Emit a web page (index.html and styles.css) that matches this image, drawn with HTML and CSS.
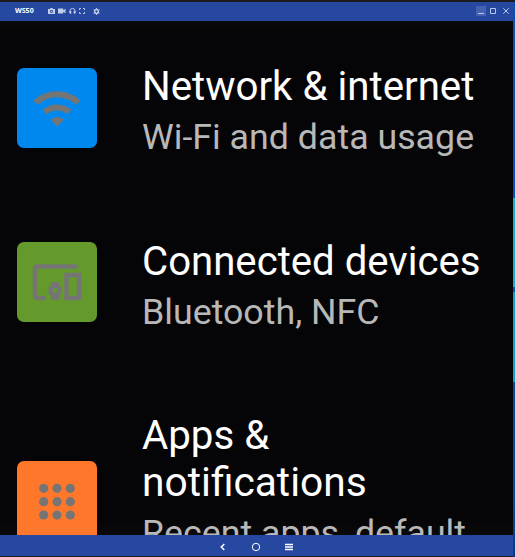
FILE: index.html
```html
<!DOCTYPE html>
<html lang="en">
<head>
<meta charset="utf-8">
<title>WS50</title>
<link rel="stylesheet" href="styles.css">
</head>
<body>
<div class="window">
  <header class="titlebar">
    <span class="name">WS50</span>
    <div class="tools">
      <svg width="7" height="6" viewBox="0 0 7 6"><path fill-rule="evenodd" d="M0 1h2L2.500 0h2L5 1h2v5H0zM3.500 1.700a1.600 1.600 0 1 0 0 3.200a1.600 1.600 0 0 0 0-3.200z"/><circle cx="3.500" cy="3.300" r=".8"/></svg>
      <svg width="8" height="6" viewBox="0 0 8 6"><path d="M0 .5h5.200v1.800L7.500.7v4.600L5.200 3.700v1.800H0z"/></svg>
      <svg width="7" height="6" viewBox="0 0 7 6"><path class="line" d="M1 4V2.800a2.500 2.300 0 0 1 5 0V4"/><path d="M.3 3h2v2.800h-1L.3 5zM4.700 3h2v2l-1 .8h-1z"/></svg>
      <svg width="6" height="6" viewBox="0 0 6 6"><path class="line" d="M.5 2V.5H2M4 .5h1.500V2M5.500 4v1.500H4M2 5.500H.5V4"/></svg>
      <svg class="gear" width="7" height="7" viewBox="0 0 7 7"><circle class="ring" cx="3.500" cy="3.500" r="1.900"/><path class="line" d="M3.500 0v1.300M3.500 5.700V7M.5 1.700l1.100.7M5.400 4.600l1.100.7M.5 5.300l1.100-.7M5.400 2.400l1.100-.7"/></svg>
    </div>
    <div class="controls">
      <span class="minimize"><svg width="10" height="10" viewBox="0 0 10 10"><path class="line" d="M2 7.500h6"/></svg></span>
      <svg width="6" height="6" viewBox="0 0 6 6"><path class="line" d="M.5.5h5v5h-5z"/></svg>
      <svg width="6" height="6" viewBox="0 0 6 6"><path class="line" d="M.3.3l5.400 5.400M5.700.3L.3 5.700"/></svg>
    </div>
  </header>
  <main class="screen">
    <section class="row">
      <div class="tile blue"><svg width="80" height="80" viewBox="0 0 80 80"><path class="arc" d="M18.500 34.500a32 32 0 0 1 43 0M27.500 44a19.500 19.500 0 0 1 25 0"/><path d="M33.500 51.500q7-5 13.500 0L40.300 58.500z"/></svg></div>
      <div class="copy"><h2>Network &amp; internet</h2><p>Wi-Fi and data usage</p></div>
    </section>
    <section class="row devices">
      <div class="tile green"><svg width="80" height="80" viewBox="0 0 80 80"><path class="frame" d="M60 24.500H20.500Q18 24.500 18 27V53.500Q18 56 20.500 56H29M49.500 33h12.500v23H49.500z"/><circle class="frame" cx="38" cy="48.500" r="4.500"/><path d="M34.500 40h7l1 4h-9zM33.500 53h9l-1 5h-7z"/></svg></div>
      <div class="copy"><h2>Connected devices</h2><p>Bluetooth, NFC</p></div>
    </section>
    <section class="row apps">
      <div class="tile orange"><svg width="80" height="80" viewBox="0 0 80 80"><g><circle cx="26.700" cy="27.300" r="4.600"/><circle cx="40" cy="27.300" r="4.600"/><circle cx="53.300" cy="27.300" r="4.600"/><circle cx="26.700" cy="40.700" r="4.600"/><circle cx="40" cy="40.700" r="4.600"/><circle cx="53.300" cy="40.700" r="4.600"/><circle cx="26.700" cy="54" r="4.600"/><circle cx="40" cy="54" r="4.600"/><circle cx="53.300" cy="54" r="4.600"/></g></svg></div>
      <div class="copy"><h2>Apps &amp;<br><span class="wide">notifications</span></h2><p>Recent apps, default</p></div>
    </section>
  </main>
  <nav class="navbar">
    <svg width="10" height="10" viewBox="0 0 10 10"><path class="nav-line" d="M6.300 2L3.300 5l3 3"/></svg>
    <svg width="10" height="10" viewBox="0 0 10 10"><circle class="nav-ring" cx="5" cy="5" r="3.700"/></svg>
    <svg width="10" height="10" viewBox="0 0 10 10"><path class="nav-bars" d="M1 2.500h8M1 5h8M1 7.500h8"/></svg>
  </nav>
</div>
<aside class="edge"></aside>
</body>
</html>
```
FILE: styles.css
```css
* { box-sizing: border-box; }
body {
  margin: 0;
  width: 515px;
  height: 557px;
  display: flex;
  overflow: hidden;
  background: #1b1b1d;
  font-family: Roboto, "Liberation Sans", sans-serif;
}
svg { display: block; flex: none; }
.window {
  width: 513px;
  height: 557px;
  padding: 2px 0 1px;
  display: flex;
  flex-direction: column;
}
.titlebar {
  flex: none;
  height: 19px;
  display: flex;
  align-items: center;
  padding: 0 4px 1px 15px;
  background: #2648a0;
  color: #fff;
}
.name {
  width: 33px;
  font: 700 7px/10px "Open Sans", sans-serif;
}
.tools { display: flex; align-items: center; gap: 3px; fill: #c3cdec; }
.gear { margin-left: 5px; }
.line { fill: none; stroke: #b9c7ee; stroke-width: 1; }
.ring { fill: none; stroke: #c3cdec; stroke-width: 1.5; }
.controls { margin-left: auto; display: flex; align-items: center; gap: 7px; }
.minimize { width: 10px; height: 10px; margin-right: -3px; background: #4562b2; }
.screen {
  flex: none;
  height: 514px;
  padding-top: 42px;
  overflow: hidden;
  background: linear-gradient(#0a0a0a, #050407 14px, #050407 498px, #0a0a0a);
}
.row { display: flex; height: 174px; padding-left: 17px; }
.tile {
  flex: none;
  width: 80px;
  height: 80px;
  margin: 5px 45px 0 0;
  border-radius: 7px;
  fill: #757575;
}
.blue { background: #0088ee; }
.green { background: #639a2b; }
.orange { background: #ff772b; }
.devices { height: 175px; }
.devices .tile { margin-top: 5.3px; }
.devices .copy { padding-top: 1px; }
.apps .tile { margin-top: 49px; }
.arc { fill: none; stroke: #757575; stroke-width: 6; }
.frame { fill: none; stroke: #757575; stroke-width: 4.5; }
.copy { white-space: nowrap; }
h2 { margin: 0; font-size: 40.25px; line-height: 47px; font-weight: 400; color: #fff; }
.devices h2 { font-size: 40.15px; }
.wide { font-size: 40.7px; line-height: 1; }
p { margin: 6px 0 0; font-size: 35.75px; line-height: 42px; color: #b8b8b8; }
.navbar {
  flex: none;
  height: 21px;
  padding: 3px 2px 0 0;
  display: flex;
  align-items: center;
  justify-content: center;
  gap: 23px;
  background: #2648a0;
}
.nav-line { fill: none; stroke: #fff; stroke-width: 1.5; }
.nav-ring { fill: none; stroke: #fff; stroke-width: 1; }
.nav-bars { stroke: #fff; stroke-width: 1.3; }
.edge {
  width: 2px;
  height: 557px;
  background: linear-gradient(#1b1b1d 0 2px, #0750b4 2px 120px, #0650c8 198px, #19b0cc 198px 287px, #0654b4 287px 292px, #08a4d0 292px 382px, #044a9c 382px 500px, #063c7c);
}
```
